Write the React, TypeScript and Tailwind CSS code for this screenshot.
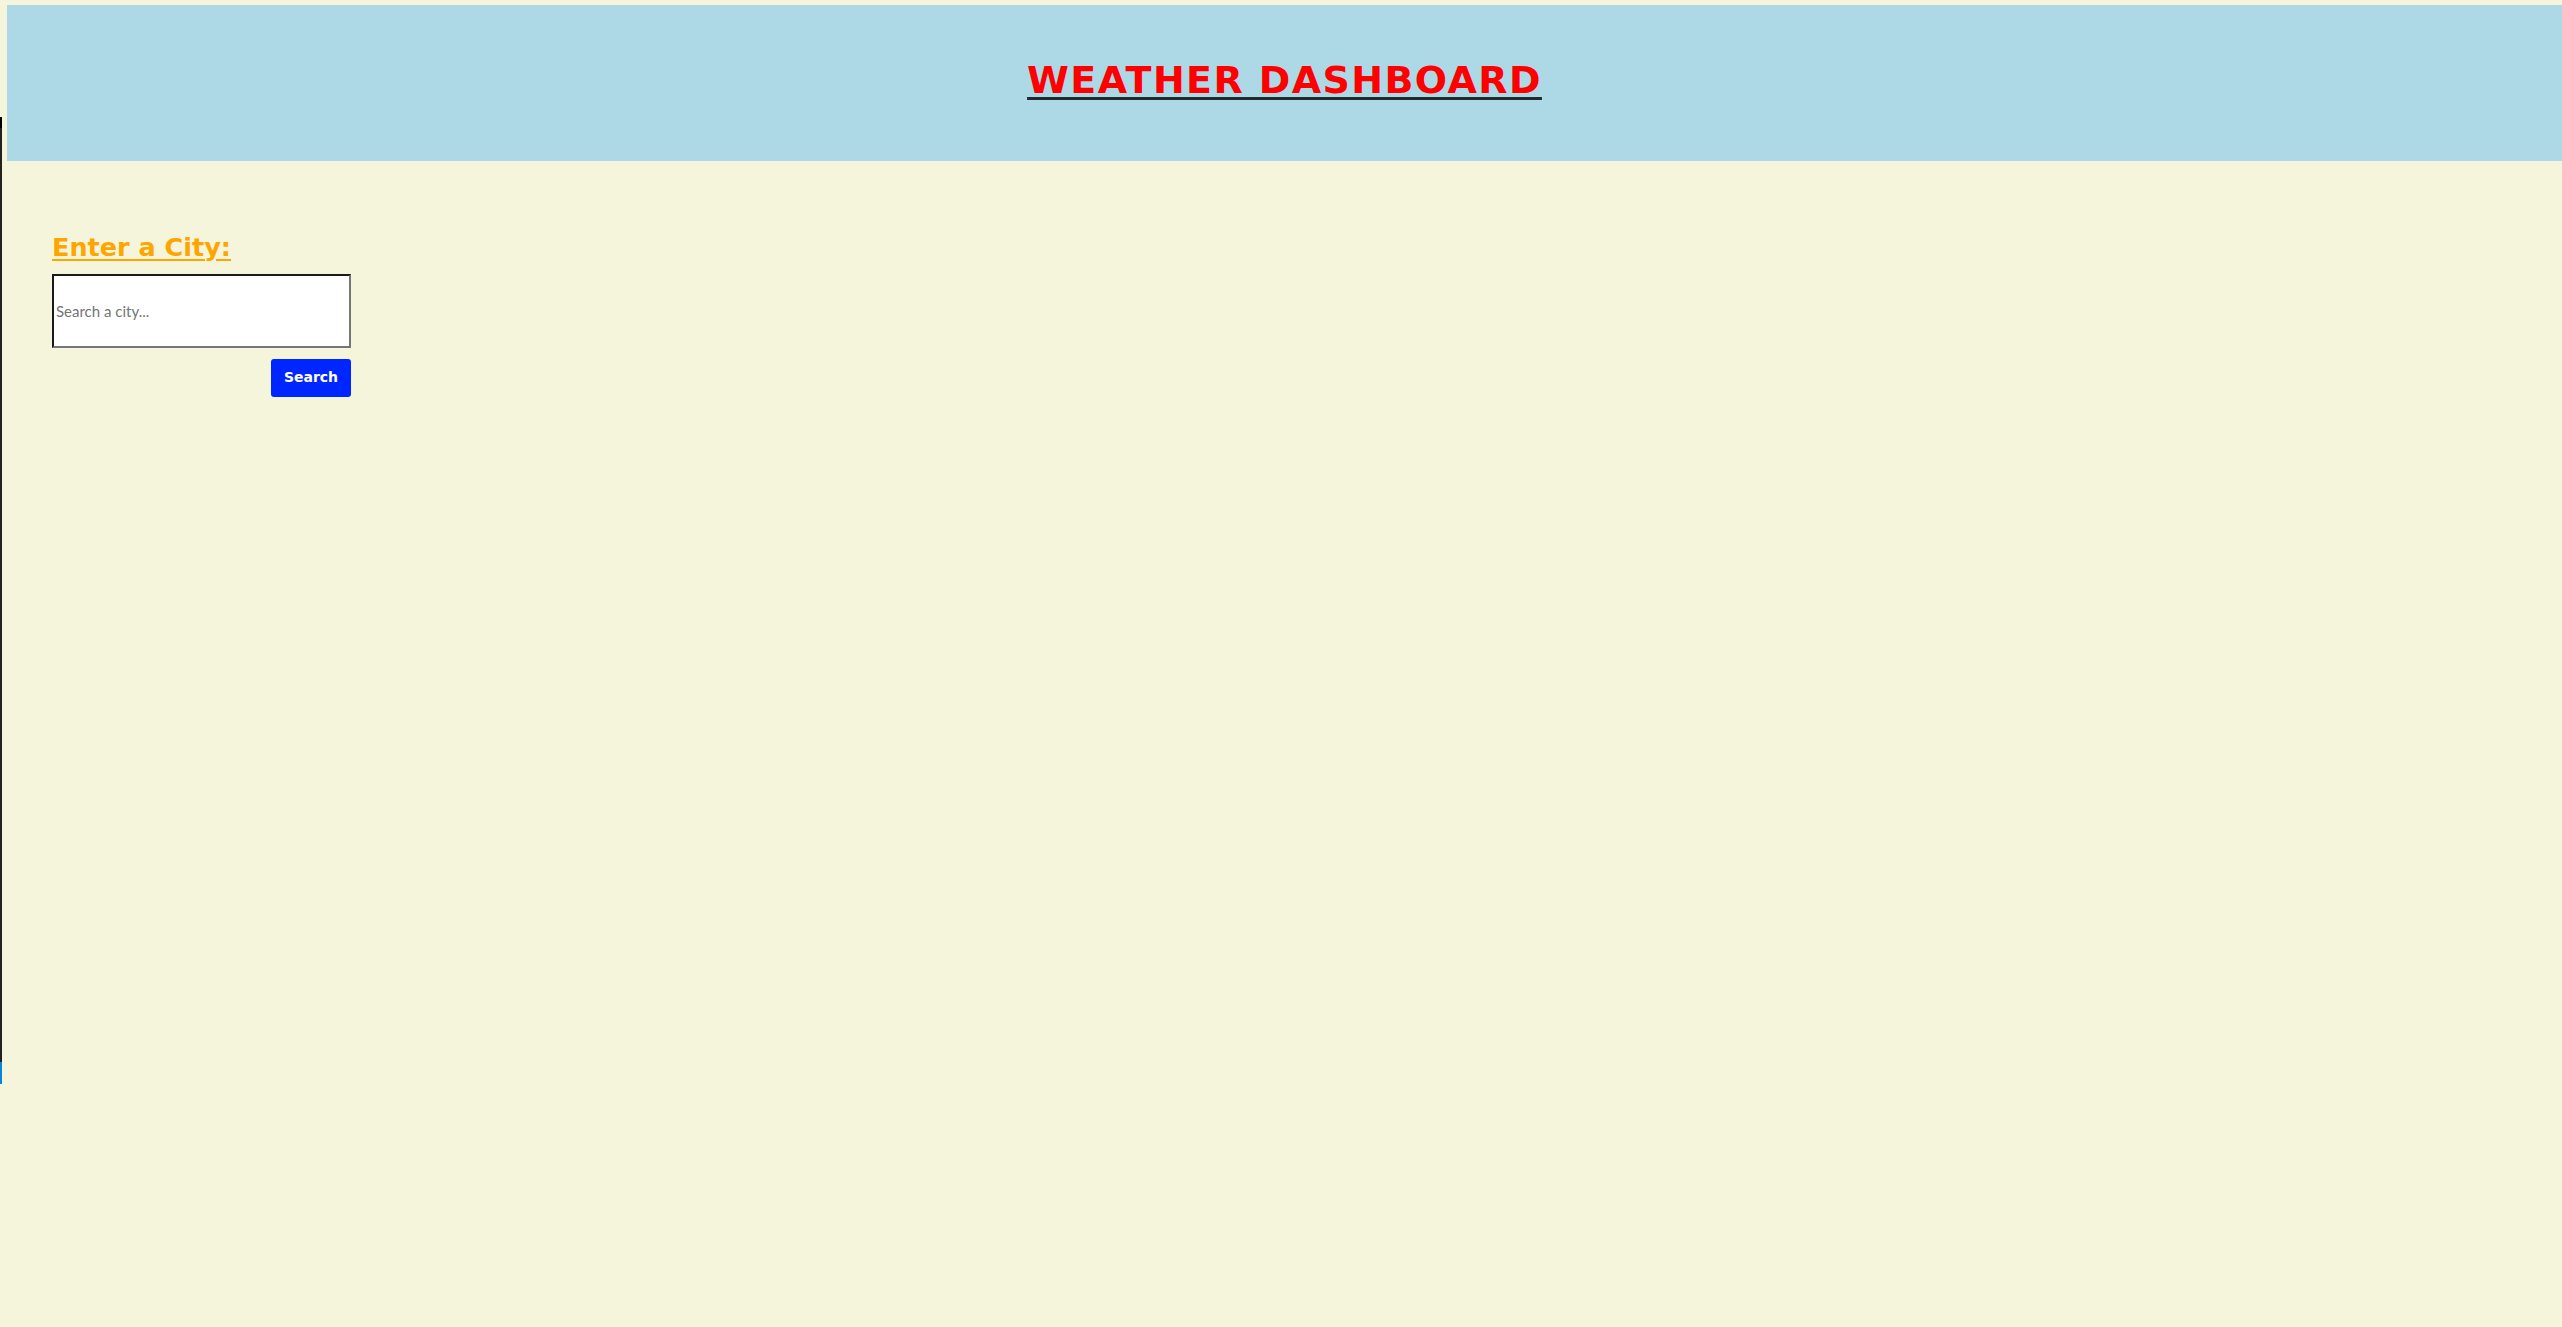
import React from "react";

export default function App() {
  return (
    <div className="flex min-h-screen bg-[#f5f5dc] font-['Lato','Noto_Sans',sans-serif]">
      {/* left edge strip from the neighbouring window */}
      <div className="flex w-[2px] shrink-0 flex-col">
        <div className="h-[117px] bg-[#f5f5dc]" />
        <div className="h-[11px] bg-black" />
        <div className="h-[934px] bg-[#222]" />
        <div className="h-[22px] bg-[#0a84d8]" />
      </div>

      <div className="flex-1 pt-[5px]">
        <header className="ml-[5px] flex h-[156px] items-center justify-center bg-[#add8e6] pb-[6px]">
          <h1 className="font-['DejaVu_Sans',sans-serif] text-[38px] font-bold uppercase leading-none tracking-[1.4px] text-[#ff0000] underline decoration-[#222a30] decoration-[3px] underline-offset-[4px]">
            Weather Dashboard
          </h1>
        </header>

        <section className="ml-[50px] mt-[74px] flex w-[300px] flex-col">
          <h2 className="font-['DejaVu_Sans',sans-serif] text-[25.5px] font-bold leading-none text-[#ffa500] underline decoration-2 underline-offset-[3px]">
            Enter a City:
          </h2>
          <input
            type="text"
            placeholder="Search a city..."
            className="mt-[13px] h-[74px] w-[299px] border-2 border-t-[#1a1a1a] border-l-[#1a1a1a] border-b-[#767676] border-r-[#767676] bg-white px-[2px] text-[15px] text-black placeholder:text-[#757575] outline-none"
          />
          <div className="mt-[11px] flex justify-end pr-[1px]">
            <button className="h-[38px] w-[80px] rounded-[3px] bg-[#0026ff] font-['DejaVu_Sans',sans-serif] text-[14px] font-bold text-white">
              Search
            </button>
          </div>
        </section>
      </div>
    </div>
  );
}
